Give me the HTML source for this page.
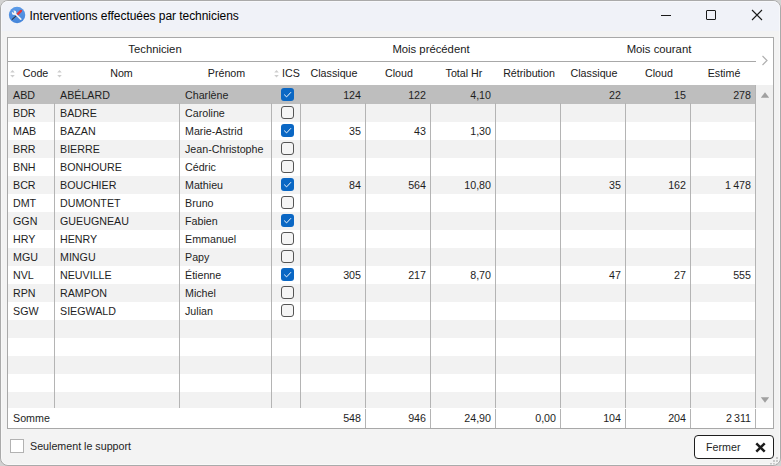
<!DOCTYPE html><html><head><meta charset="utf-8"><style>
*{margin:0;padding:0;box-sizing:border-box}
html,body{width:781px;height:466px;overflow:hidden;background:#d2d2d2}
body{font-family:"Liberation Sans",sans-serif;position:relative}
.abs{position:absolute}
#win{position:absolute;left:0;top:0;width:781px;height:466px;border:1px solid #aaaaaa;border-radius:8px;background:#f3f3f3;overflow:hidden}
#tbar{position:absolute;left:0;top:0;width:781px;height:30px;background:#f0f2f8}
#title{position:absolute;left:28.5px;top:6.7px;font-size:12px;line-height:16px;color:#000;white-space:nowrap;letter-spacing:-0.05px}
#frame{position:absolute;left:7px;top:37px;width:767px;height:392px;border:1px solid #a8a8a8;background:#fff}
.t{position:absolute;font-size:10.7px;line-height:13px;color:#1e1e1e;white-space:nowrap}
.hd{color:#202020}
.r{text-align:right}
.g{font-size:11.3px}
.c{text-align:center}
.vl{position:absolute;width:1px;background:#b4b4b4}
.row{position:absolute;left:0;height:18px}
.cb{position:absolute;width:13px;height:13px;border-radius:3px}
.cb.off{border:1px solid #555;background:#f5f5f5}
.cb.on{background:#0a67c4}
</style></head><body>
<div id="win">
<div id="tbar"></div>
<svg class="abs" style="left:-1px;top:-1px" width="32" height="32" viewBox="0 0 32 32">
<defs><linearGradient id="g" x1="0" y1="0" x2="0" y2="1"><stop offset="0" stop-color="#5b9be8"/><stop offset="1" stop-color="#4585da"/></linearGradient></defs>
<circle cx="17.05" cy="14.95" r="8.2" fill="url(#g)"/>
<path d="M12.2 19.4 L16.4 15.6" stroke="#2e3a48" stroke-width="1.1" stroke-linecap="round"/>
<path d="M17.7 14.2 L21.0 10.9" stroke="#dc3a42" stroke-width="2.4" stroke-linecap="round"/>
<path d="M15.0 13.6 L20.8 19.1" stroke="#f2f2f2" stroke-width="1.6" stroke-linecap="round"/>
<circle cx="14.1" cy="12.8" r="2.3" fill="#f2f2f2"/><path d="M13.9 12.6 L11.4 10.1" stroke="#5595e4" stroke-width="1.4"/>
</svg>
<div id="title">Interventions effectuées par techniciens</div>
<div class="abs" style="left:660px;top:14px;width:10px;height:1px;background:#1a1a1a"></div>
<div class="abs" style="left:705px;top:9px;width:10px;height:10px;border:1px solid #1a1a1a;border-radius:1px"></div>
<svg class="abs" style="left:750px;top:8px" width="12" height="12" viewBox="0 0 12 12"><path d="M1 1L11 11M11 1L1 11" stroke="#1a1a1a" stroke-width="1.1"/></svg>
<div class="abs" style="left:6px;top:36px;width:767px;height:392px;border:1px solid #a8a8a8;background:#fff"></div>
<div class="abs" style="left:7px;top:60px;width:748px;height:1px;background:#a8a8a8"></div>
<div class="t c hd g" style="left:8px;top:42px;width:292px;">Technicien</div>
<div class="t c hd g" style="left:300px;top:42px;width:260px;">Mois précédent</div>
<div class="t c hd g" style="left:560.5px;top:42px;width:195px;">Mois courant</div>
<svg class="abs" style="left:760px;top:54px" width="8" height="12" viewBox="0 0 8 12"><path d="M1.5 1L6 5.5L1.5 10" stroke="#b0b0b0" stroke-width="1.2" fill="none"/></svg>
<div class="t c hd" style="left:16px;top:66px;width:37px;">Code</div>
<svg class="abs" style="left:9px;top:68px" width="6" height="9" viewBox="0 0 6 9"><path d="M0.2 3.4L2.5 1.1L4.8 3.4ZM0.2 6.1L2.5 8.4L4.8 6.1Z" fill="#cdcdcd"/></svg>
<div class="t c hd" style="left:63px;top:66px;width:115px;">Nom</div>
<svg class="abs" style="left:56px;top:68px" width="6" height="9" viewBox="0 0 6 9"><path d="M0.2 3.4L2.5 1.1L4.8 3.4ZM0.2 6.1L2.5 8.4L4.8 6.1Z" fill="#cdcdcd"/></svg>
<div class="t c hd" style="left:179.5px;top:66px;width:92px;">Prénom</div>
<div class="t hd" style="left:281px;top:66px;width:20px;">ICS</div>
<svg class="abs" style="left:273px;top:68px" width="6" height="9" viewBox="0 0 6 9"><path d="M0.2 3.4L2.5 1.1L4.8 3.4ZM0.2 6.1L2.5 8.4L4.8 6.1Z" fill="#cdcdcd"/></svg>
<div class="t c hd" style="left:300.5px;top:66px;width:65px;">Classique</div>
<div class="t c hd" style="left:365.5px;top:66px;width:65px;">Cloud</div>
<div class="t c hd" style="left:430.5px;top:66px;width:65px;">Total Hr</div>
<div class="t c hd" style="left:495.5px;top:66px;width:65px;">Rétribution</div>
<div class="t c hd" style="left:560.5px;top:66px;width:65px;">Classique</div>
<div class="t c hd" style="left:625.5px;top:66px;width:65px;">Cloud</div>
<div class="t c hd" style="left:690.5px;top:66px;width:65px;">Estimé</div>
<div class="abs" style="left:7px;top:84px;width:747px;height:19px;background:#bebebe"></div>
<div class="abs" style="left:7px;top:103px;width:747px;height:18px;background:#f2f2f2"></div>
<div class="abs" style="left:7px;top:121px;width:747px;height:18px;background:#ffffff"></div>
<div class="abs" style="left:7px;top:139px;width:747px;height:18px;background:#f2f2f2"></div>
<div class="abs" style="left:7px;top:157px;width:747px;height:18px;background:#ffffff"></div>
<div class="abs" style="left:7px;top:175px;width:747px;height:18px;background:#f2f2f2"></div>
<div class="abs" style="left:7px;top:193px;width:747px;height:18px;background:#ffffff"></div>
<div class="abs" style="left:7px;top:211px;width:747px;height:18px;background:#f2f2f2"></div>
<div class="abs" style="left:7px;top:229px;width:747px;height:18px;background:#ffffff"></div>
<div class="abs" style="left:7px;top:247px;width:747px;height:18px;background:#f2f2f2"></div>
<div class="abs" style="left:7px;top:265px;width:747px;height:18px;background:#ffffff"></div>
<div class="abs" style="left:7px;top:283px;width:747px;height:18px;background:#f2f2f2"></div>
<div class="abs" style="left:7px;top:301px;width:747px;height:18px;background:#ffffff"></div>
<div class="abs" style="left:7px;top:319px;width:747px;height:18px;background:#f2f2f2"></div>
<div class="abs" style="left:7px;top:337px;width:747px;height:18px;background:#ffffff"></div>
<div class="abs" style="left:7px;top:355px;width:747px;height:18px;background:#f2f2f2"></div>
<div class="abs" style="left:7px;top:373px;width:747px;height:18px;background:#ffffff"></div>
<div class="abs" style="left:7px;top:391px;width:747px;height:16px;background:#f2f2f2"></div>
<div class="vl" style="left:53px;top:102px;height:305px"></div>
<div class="vl" style="left:178px;top:102px;height:305px"></div>
<div class="vl" style="left:270px;top:102px;height:305px"></div>
<div class="vl" style="left:299px;top:102px;height:305px"></div>
<div class="vl" style="left:364px;top:102px;height:305px"></div>
<div class="vl" style="left:429px;top:102px;height:305px"></div>
<div class="vl" style="left:494px;top:102px;height:305px"></div>
<div class="vl" style="left:559px;top:102px;height:305px"></div>
<div class="vl" style="left:624px;top:102px;height:305px"></div>
<div class="vl" style="left:689px;top:102px;height:305px"></div>
<div class="vl" style="left:754px;top:102px;height:305px"></div>
<div class="vl" style="left:364px;top:408px;height:19px"></div>
<div class="vl" style="left:429px;top:408px;height:19px"></div>
<div class="vl" style="left:494px;top:408px;height:19px"></div>
<div class="vl" style="left:559px;top:408px;height:19px"></div>
<div class="vl" style="left:624px;top:408px;height:19px"></div>
<div class="vl" style="left:689px;top:408px;height:19px"></div>
<div class="vl" style="left:754px;top:408px;height:19px"></div>
<div class="abs" style="left:754px;top:84px;width:18px;height:323px;background:#f0f0f0;border-left:1px solid #b4b4b4"></div>
<svg class="abs" style="left:759px;top:91px" width="10" height="6" viewBox="0 0 10 6"><path d="M0.8 5.8L5 0.2L9.2 5.8Z" fill="#a0a0a0"/></svg>
<svg class="abs" style="left:759px;top:396px" width="10" height="6" viewBox="0 0 10 6"><path d="M0.8 0.2L5 5.8L9.2 0.2Z" fill="#a0a0a0"/></svg>
<div class="t " style="left:12px;top:88px;width:40px;">ABD</div>
<div class="t " style="left:59px;top:88px;width:118px;">ABÉLARD</div>
<div class="t " style="left:184px;top:88px;width:86px;">Charlène</div>
<div class="cb on" style="left:280px;top:87px"></div>
<svg class="abs" style="left:280px;top:87px" width="13" height="13" viewBox="0 0 13 13"><path d="M3.2 6.6L5.6 8.9L10 4.2" stroke="#fff" stroke-width="0.95" fill="none"/></svg>
<div class="t r" style="left:299px;top:88px;width:61px;">124</div>
<div class="t r" style="left:364px;top:88px;width:61px;">122</div>
<div class="t r" style="left:429px;top:88px;width:61px;">4,10</div>
<div class="t r" style="left:559px;top:88px;width:61px;">22</div>
<div class="t r" style="left:624px;top:88px;width:61px;">15</div>
<div class="t r" style="left:689px;top:88px;width:61px;">278</div>
<div class="t " style="left:12px;top:106px;width:40px;">BDR</div>
<div class="t " style="left:59px;top:106px;width:118px;">BADRE</div>
<div class="t " style="left:184px;top:106px;width:86px;">Caroline</div>
<div class="cb off" style="left:280px;top:105px"></div>
<div class="t " style="left:12px;top:124px;width:40px;">MAB</div>
<div class="t " style="left:59px;top:124px;width:118px;">BAZAN</div>
<div class="t " style="left:184px;top:124px;width:86px;">Marie-Astrid</div>
<div class="cb on" style="left:280px;top:123px"></div>
<svg class="abs" style="left:280px;top:123px" width="13" height="13" viewBox="0 0 13 13"><path d="M3.2 6.6L5.6 8.9L10 4.2" stroke="#fff" stroke-width="0.95" fill="none"/></svg>
<div class="t r" style="left:299px;top:124px;width:61px;">35</div>
<div class="t r" style="left:364px;top:124px;width:61px;">43</div>
<div class="t r" style="left:429px;top:124px;width:61px;">1,30</div>
<div class="t " style="left:12px;top:142px;width:40px;">BRR</div>
<div class="t " style="left:59px;top:142px;width:118px;">BIERRE</div>
<div class="t " style="left:184px;top:142px;width:86px;">Jean-Christophe</div>
<div class="cb off" style="left:280px;top:141px"></div>
<div class="t " style="left:12px;top:160px;width:40px;">BNH</div>
<div class="t " style="left:59px;top:160px;width:118px;">BONHOURE</div>
<div class="t " style="left:184px;top:160px;width:86px;">Cédric</div>
<div class="cb off" style="left:280px;top:159px"></div>
<div class="t " style="left:12px;top:178px;width:40px;">BCR</div>
<div class="t " style="left:59px;top:178px;width:118px;">BOUCHIER</div>
<div class="t " style="left:184px;top:178px;width:86px;">Mathieu</div>
<div class="cb on" style="left:280px;top:177px"></div>
<svg class="abs" style="left:280px;top:177px" width="13" height="13" viewBox="0 0 13 13"><path d="M3.2 6.6L5.6 8.9L10 4.2" stroke="#fff" stroke-width="0.95" fill="none"/></svg>
<div class="t r" style="left:299px;top:178px;width:61px;">84</div>
<div class="t r" style="left:364px;top:178px;width:61px;">564</div>
<div class="t r" style="left:429px;top:178px;width:61px;">10,80</div>
<div class="t r" style="left:559px;top:178px;width:61px;">35</div>
<div class="t r" style="left:624px;top:178px;width:61px;">162</div>
<div class="t r" style="left:689px;top:178px;width:61px;">1 478</div>
<div class="t " style="left:12px;top:196px;width:40px;">DMT</div>
<div class="t " style="left:59px;top:196px;width:118px;">DUMONTET</div>
<div class="t " style="left:184px;top:196px;width:86px;">Bruno</div>
<div class="cb off" style="left:280px;top:195px"></div>
<div class="t " style="left:12px;top:214px;width:40px;">GGN</div>
<div class="t " style="left:59px;top:214px;width:118px;">GUEUGNEAU</div>
<div class="t " style="left:184px;top:214px;width:86px;">Fabien</div>
<div class="cb on" style="left:280px;top:213px"></div>
<svg class="abs" style="left:280px;top:213px" width="13" height="13" viewBox="0 0 13 13"><path d="M3.2 6.6L5.6 8.9L10 4.2" stroke="#fff" stroke-width="0.95" fill="none"/></svg>
<div class="t " style="left:12px;top:232px;width:40px;">HRY</div>
<div class="t " style="left:59px;top:232px;width:118px;">HENRY</div>
<div class="t " style="left:184px;top:232px;width:86px;">Emmanuel</div>
<div class="cb off" style="left:280px;top:231px"></div>
<div class="t " style="left:12px;top:250px;width:40px;">MGU</div>
<div class="t " style="left:59px;top:250px;width:118px;">MINGU</div>
<div class="t " style="left:184px;top:250px;width:86px;">Papy</div>
<div class="cb off" style="left:280px;top:249px"></div>
<div class="t " style="left:12px;top:268px;width:40px;">NVL</div>
<div class="t " style="left:59px;top:268px;width:118px;">NEUVILLE</div>
<div class="t " style="left:184px;top:268px;width:86px;">Étienne</div>
<div class="cb on" style="left:280px;top:267px"></div>
<svg class="abs" style="left:280px;top:267px" width="13" height="13" viewBox="0 0 13 13"><path d="M3.2 6.6L5.6 8.9L10 4.2" stroke="#fff" stroke-width="0.95" fill="none"/></svg>
<div class="t r" style="left:299px;top:268px;width:61px;">305</div>
<div class="t r" style="left:364px;top:268px;width:61px;">217</div>
<div class="t r" style="left:429px;top:268px;width:61px;">8,70</div>
<div class="t r" style="left:559px;top:268px;width:61px;">47</div>
<div class="t r" style="left:624px;top:268px;width:61px;">27</div>
<div class="t r" style="left:689px;top:268px;width:61px;">555</div>
<div class="t " style="left:12px;top:286px;width:40px;">RPN</div>
<div class="t " style="left:59px;top:286px;width:118px;">RAMPON</div>
<div class="t " style="left:184px;top:286px;width:86px;">Michel</div>
<div class="cb off" style="left:280px;top:285px"></div>
<div class="t " style="left:12px;top:304px;width:40px;">SGW</div>
<div class="t " style="left:59px;top:304px;width:118px;">SIEGWALD</div>
<div class="t " style="left:184px;top:304px;width:86px;">Julian</div>
<div class="cb off" style="left:280px;top:303px"></div>
<div class="t " style="left:12px;top:411px;width:60px;">Somme</div>
<div class="t r" style="left:299px;top:411px;width:61px;">548</div>
<div class="t r" style="left:364px;top:411px;width:61px;">946</div>
<div class="t r" style="left:429px;top:411px;width:61px;">24,90</div>
<div class="t r" style="left:494px;top:411px;width:61px;">0,00</div>
<div class="t r" style="left:559px;top:411px;width:61px;">104</div>
<div class="t r" style="left:624px;top:411px;width:61px;">204</div>
<div class="t r" style="left:689px;top:411px;width:61px;">2 311</div>
<div class="abs" style="left:9px;top:438px;width:14px;height:14px;border:1px solid #b2b2b2;background:#fff"></div>
<div class="t " style="left:29px;top:439px;width:120px;">Seulement le support</div>
<div class="abs" style="left:693px;top:434px;width:80px;height:24px;border:1.5px solid #1e1e1e;border-radius:4px;background:#fff"></div>
<div class="t " style="left:705px;top:440px;width:40px;">Fermer</div>
<svg class="abs" style="left:754px;top:441px" width="11" height="11" viewBox="0 0 11 11"><path d="M1.3 1.3L9.7 9.7M9.7 1.3L1.3 9.7" stroke="#1c1c1c" stroke-width="2.5"/></svg>
<div class="abs" style="left:775px;top:456px;width:2px;height:2px;background:#c8c8c8"></div>
<div class="abs" style="left:772px;top:459px;width:2px;height:2px;background:#c8c8c8"></div>
<div class="abs" style="left:775px;top:459px;width:2px;height:2px;background:#c8c8c8"></div>
<div class="abs" style="left:769px;top:462px;width:2px;height:2px;background:#c8c8c8"></div>
<div class="abs" style="left:772px;top:462px;width:2px;height:2px;background:#c8c8c8"></div>
<div class="abs" style="left:775px;top:462px;width:2px;height:2px;background:#c8c8c8"></div>
<div class="abs" style="left:0;top:0;width:779px;height:464px;border:1px solid rgba(255,255,255,0.45);border-radius:7px;pointer-events:none"></div>
</div></body></html>
